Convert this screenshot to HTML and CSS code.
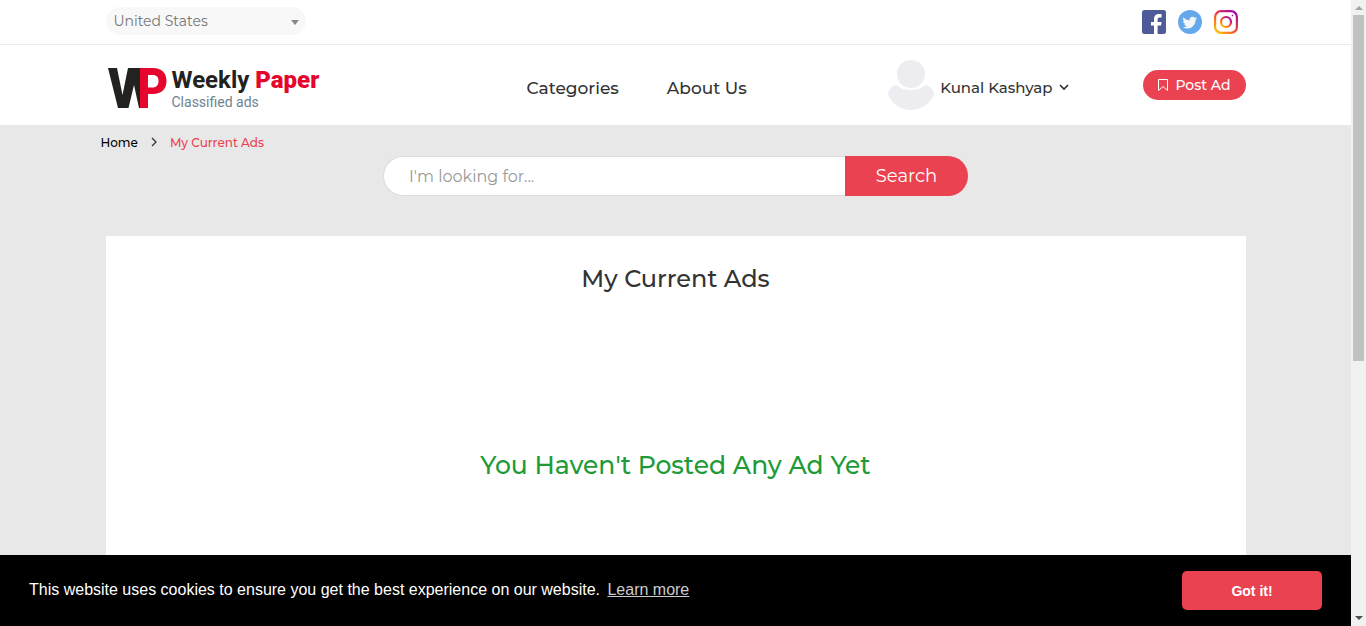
FILE: index.html
```html
<!DOCTYPE html>
<html lang="en">
<head>
<meta charset="utf-8">
<meta name="viewport" content="width=device-width, initial-scale=1">
<title>Weekly Paper - My Current Ads</title>
<link rel="stylesheet" href="styles.css">
</head>
<body>
<div class="window">
  <div class="page">
    <div class="topbar">
      <div class="container topbar-row">
        <div class="country">
          <select class="country-select" aria-label="Country"><option>United States</option></select>
          <span class="country-arrow"></span>
        </div>
        <nav class="social" aria-label="Social links">
          <a href="#" aria-label="Facebook"><svg width="24" height="24" viewBox="0 0 24 24"><rect width="24" height="24" rx="2.5" fill="#4e5b97"/><path d="M12 24v-8.500H9v-3.500h3V9.500C12 6.200 13.600 4 17 4h2.500v3.500h-2c-1.400 0-1.900.700-1.900 2V12h4l-.6 3.500h-3.400V24z" fill="#fff"/></svg></a>
          <a href="#" aria-label="Twitter"><svg width="24" height="24" viewBox="0 0 24 24"><circle cx="12" cy="12" r="12" fill="#65a8eb"/><path d="M19 8.100c-.5.200-1.100.4-1.700.5.600-.4 1.100-.9 1.300-1.600-.6.300-1.200.6-1.900.7a3 3 0 0 0-5.100 2.700C9.100 10.300 6.900 9.100 5.500 7.300c-.8 1.400-.4 3.100.9 4-.5 0-.9-.1-1.300-.4 0 1.500 1 2.700 2.400 3-.5.100-.9.100-1.300 0 .4 1.200 1.500 2.100 2.800 2.100a6 6 0 0 1-4.400 1.200c5.900 3.600 13-.3 13-7.400.6-.4 1.100-1 1.400-1.700z" fill="#f4f6f8"/></svg></a>
          <a href="#" aria-label="Instagram"><svg width="24" height="24" viewBox="0 0 24 24"><defs><linearGradient id="ig" x1="0.100" y1="1" x2="0.900" y2="0"><stop offset="0" stop-color="#ffc107"/><stop offset=".5" stop-color="#f44336"/><stop offset="1" stop-color="#9c00b5"/></linearGradient></defs><rect x="1.100" y="1.100" width="21.800" height="21.800" rx="6" fill="none" stroke="url(#ig)" stroke-width="2.200"/><circle cx="12" cy="12" r="5" fill="none" stroke="url(#ig)" stroke-width="2.200"/><circle cx="18.400" cy="5.600" r=".8" fill="#9c00b5"/></svg></a>
        </nav>
      </div>
    </div>
    <header class="header">
      <div class="container header-row">
        <a class="brand" href="#">
          <svg class="brand-mark" width="60" height="42" viewBox="0 0 60 42" aria-hidden="true"><path d="M0 1h9l5.500 27L20 1h13v40h-2L26 18l-5.500 23H10z" fill="#222220"/><path fill-rule="evenodd" d="M32 1h13c8.500 0 13.500 5 13.500 13S53.500 27 45 27h-5v14h-8zM40 8v12.500h4.500c4 0 6-2.500 6-6.500s-2-6-6-6z" fill="#e6052d"/></svg>
          <span class="brand-copy"><span class="brand-name">Weekly <b>Paper</b></span><span class="brand-tag">Classified ads</span></span>
        </a>
        <nav class="menu" aria-label="Main"><a href="#">Categories</a><a href="#">About Us</a></nav>
        <button class="account" type="button">
          <svg width="46" height="50" viewBox="0 0 46 50" aria-hidden="true"><circle cx="23" cy="14" r="14" fill="#ededf1"/><path d="M8 25c4 3 9 5 15 5s11-2 15-5c4 1 7 4 8 9-3 9-12 16-23 16S3 43 0 34c1-5 4-8 8-9z" fill="#ededf1"/></svg>
          <span>Kunal Kashyap</span>
          <svg class="chevron" width="10" height="8" viewBox="0 0 10 8" aria-hidden="true"><path d="M1 2l4 4 4-4" fill="none" stroke="#333" stroke-width="1.700"/></svg>
        </button>
        <a class="post" href="#"><svg width="12" height="12" viewBox="0 0 12 12" aria-hidden="true"><path d="M1.500.5h9v11L6 7.500l-4.500 4z" fill="none" stroke="#fff"/></svg>Post Ad</a>
      </div>
    </header>
    <main class="main">
      <nav class="breadcrumb" aria-label="Breadcrumb"><a href="#">Home</a><svg width="6" height="10" viewBox="0 0 6 10" aria-hidden="true"><path d="M1 1l4 4-4 4" fill="none" stroke="#333" stroke-width="1.300"/></svg><span>My Current Ads</span></nav>
      <form class="search"><input class="search-input" type="text" aria-label="Search ads" placeholder="I'm looking for..."><button class="search-button" type="button">Search</button></form>
      <section class="container panel">
        <h1 class="panel-title">My Current Ads</h1>
        <p class="panel-empty">You Haven't Posted Any Ad Yet</p>
      </section>
    </main>
  </div>
  <div class="scrollbar" aria-hidden="true"><span class="scroll-up"></span><span class="scroll-track"><span class="scroll-thumb"></span></span><span class="scroll-down"></span></div>
  <div class="cookie" role="region" aria-label="Cookie notice">
    <p class="cookie-text">This website uses cookies to ensure you get the best experience on our website. <a href="#">Learn more</a></p>
    <button class="cookie-button" type="button">Got it!</button>
  </div>
</div>
</body>
</html>
```

FILE: styles.css
```css
* { box-sizing: border-box; }
body { margin: 0; font-family: Montserrat, Inter, sans-serif; color: #333; background: #e8e8e8; }
a { color: inherit; text-decoration: none; }
button, input, select { font: inherit; }
svg { display: block; flex: none; }
.window { position: relative; display: flex; height: 100vh; overflow: hidden; }
.page { flex: 1; min-width: 0; }
.container { width: 100%; max-width: 1140px; margin: 0 auto; }

.topbar { background: #fff; border-bottom: 1px solid #ebebeb; }
.topbar-row { display: flex; align-items: center; justify-content: space-between; height: 44px; }
.country { position: relative; width: 200px; height: 30px; }
.country-select { display: block; width: 100%; height: 28px; padding: 0 8px; border: 0; border-radius: 14px; background: #f8f8f8; color: #777; font-size: 14px; appearance: none; }
.country-arrow { position: absolute; right: 7px; top: 13px; border: 4px solid transparent; border-top: 5px solid #888; border-bottom: 0; pointer-events: none; }
.social { display: flex; gap: 12px; padding-right: 8px; }

.header { background: #fff; }
.header-row { display: flex; align-items: center; height: 80px; }
.brand { display: flex; align-items: center; gap: 4px; width: 421px; padding: 5px 0 0 2px; }
.brand-copy { display: flex; flex-direction: column; font-family: Roboto, sans-serif; }
.brand-name { font-size: 24px; line-height: 28px; font-weight: 700; color: #222220; }
.brand-name b { color: #e6052d; }
.brand-tag { font-size: 14px; line-height: 16px; color: #6d8391; }
.menu { display: flex; gap: 48px; padding-top: 5px; font-size: 17px; font-weight: 500; }
.account { display: flex; align-items: center; gap: 6px; margin-left: auto; padding: 0; border: 0; background: none; color: #333; font-size: 15px; font-weight: 500; cursor: pointer; }
.account span { padding-top: 4px; }
.chevron { margin-top: 4px; }
.post { display: flex; align-items: center; justify-content: center; gap: 6px; width: 103px; height: 30px; margin-left: 74px; border-radius: 15px; background: #ea4251; color: #fff; font-size: 14px; font-weight: 500; }

.main { padding-top: 8px; }
.breadcrumb { display: flex; align-items: center; gap: 13px; max-width: 1150px; height: 18px; margin: 0 auto; font-size: 12px; font-weight: 500; color: #ea4251; }
.breadcrumb a { color: #000; }
.search { display: flex; width: 585px; max-width: 100%; height: 40px; margin: 5px auto 40px; }
.search-input { flex: 1; min-width: 0; padding: 0 25px; border: 1px solid #ddd; border-right: 0; border-radius: 20px 0 0 20px; background: #fff; font-size: 16px; }
.search-input::placeholder { color: #999; opacity: 1; }
.search-button { width: 123px; padding: 0; border: 0; border-radius: 0 20px 20px 0; background: #ea4251; color: #fff; font-size: 18px; }
.panel { min-height: 480px; padding-top: 27px; background: #fff; text-align: center; }
.panel-title { margin: 0; font-size: 24px; line-height: 32px; font-weight: 500; }
.panel-empty { margin: 154px 0 0; font-size: 25px; line-height: 32px; font-weight: 500; color: #1e9b38; }

.cookie { position: absolute; left: 0; right: 15px; bottom: 0; display: flex; align-items: center; justify-content: space-between; padding: 16px 29px; background: #000; color: #fff; font-family: "Liberation Sans", sans-serif; font-size: 16px; }
.cookie-text { margin: 0; padding-bottom: 2px; }
.cookie-text a { margin-left: 3px; color: #ccc; text-decoration: underline; }
.cookie-button { width: 140px; height: 39px; border: 0; border-radius: 5px; background: #ea4251; color: #fff; font-size: 14px; font-weight: 700; }

.scrollbar { display: flex; flex-direction: column; align-items: center; width: 15px; padding: 6px 0; background: #f1f1f1; }
.scroll-up, .scroll-down { border: 4px solid transparent; }
.scroll-up { border-top: 0; border-bottom-color: #a3a3a3; }
.scroll-down { border-bottom: 0; border-top-color: #505050; }
.scroll-track { flex: 1; width: 11px; padding: 5px 0; }
.scroll-thumb { display: block; height: 58%; background: #c1c1c1; }
```
